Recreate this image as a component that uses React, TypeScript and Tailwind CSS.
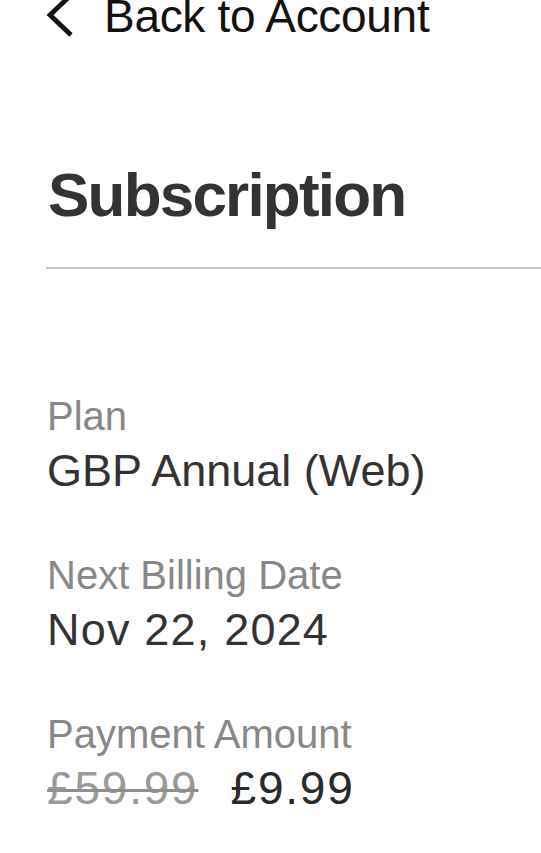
import React from "react";

export default function App() {
  const font = { fontFamily: '"Liberation Sans", Arial, sans-serif' };
  return (
    <div className="w-[541px] h-[853px] bg-white overflow-hidden" style={font}>
      <div className="flex items-start pl-[46px] mt-[-7px] h-[44px]">
        <svg width="28" height="44" viewBox="0 0 28 44" className="shrink-0">
          <polyline points="25,2 4,22 25,42" fill="none" stroke="#121212" strokeWidth="4.8" />
        </svg>
        <div className="ml-[30px] mt-[0px] text-[46px] leading-none text-[#121212] whitespace-nowrap tracking-[-0.3px]">
          Back to Account
        </div>
      </div>
      <div className="pl-[47px] pt-[127px]">
        <h1 className="text-[62px] leading-none font-bold text-[#333333] tracking-[-1.8px] pl-[1px]">
          Subscription
        </h1>
      </div>
      <div className="ml-[46px] mt-[41px] h-[2px] bg-[#c8c8c8]" />
      <div className="pl-[47px] pt-[127px] flex flex-col">
        <div className="text-[40px] leading-none text-[#888888]">Plan</div>
        <div className="mt-[12px] text-[45px] leading-none text-[#333333]">GBP Annual (Web)</div>
        <div className="mt-[62px] text-[40px] leading-none text-[#888888]">Next Billing Date</div>
        <div className="mt-[12px] text-[45px] leading-none text-[#333333] tracking-[1.2px]">Nov 22, 2024</div>
        <div className="mt-[62px] text-[40px] leading-none text-[#888888]">Payment Amount</div>
        <div className="mt-[11px] flex items-start gap-[32px] text-[46px] leading-none tracking-[1.8px]">
          <span className="text-[#9a9a97] line-through decoration-[#8f8f8c] decoration-[3px]">£59.99</span>
          <span className="text-[#2a2a2a]">£9.99</span>
        </div>
      </div>
    </div>
  );
}
